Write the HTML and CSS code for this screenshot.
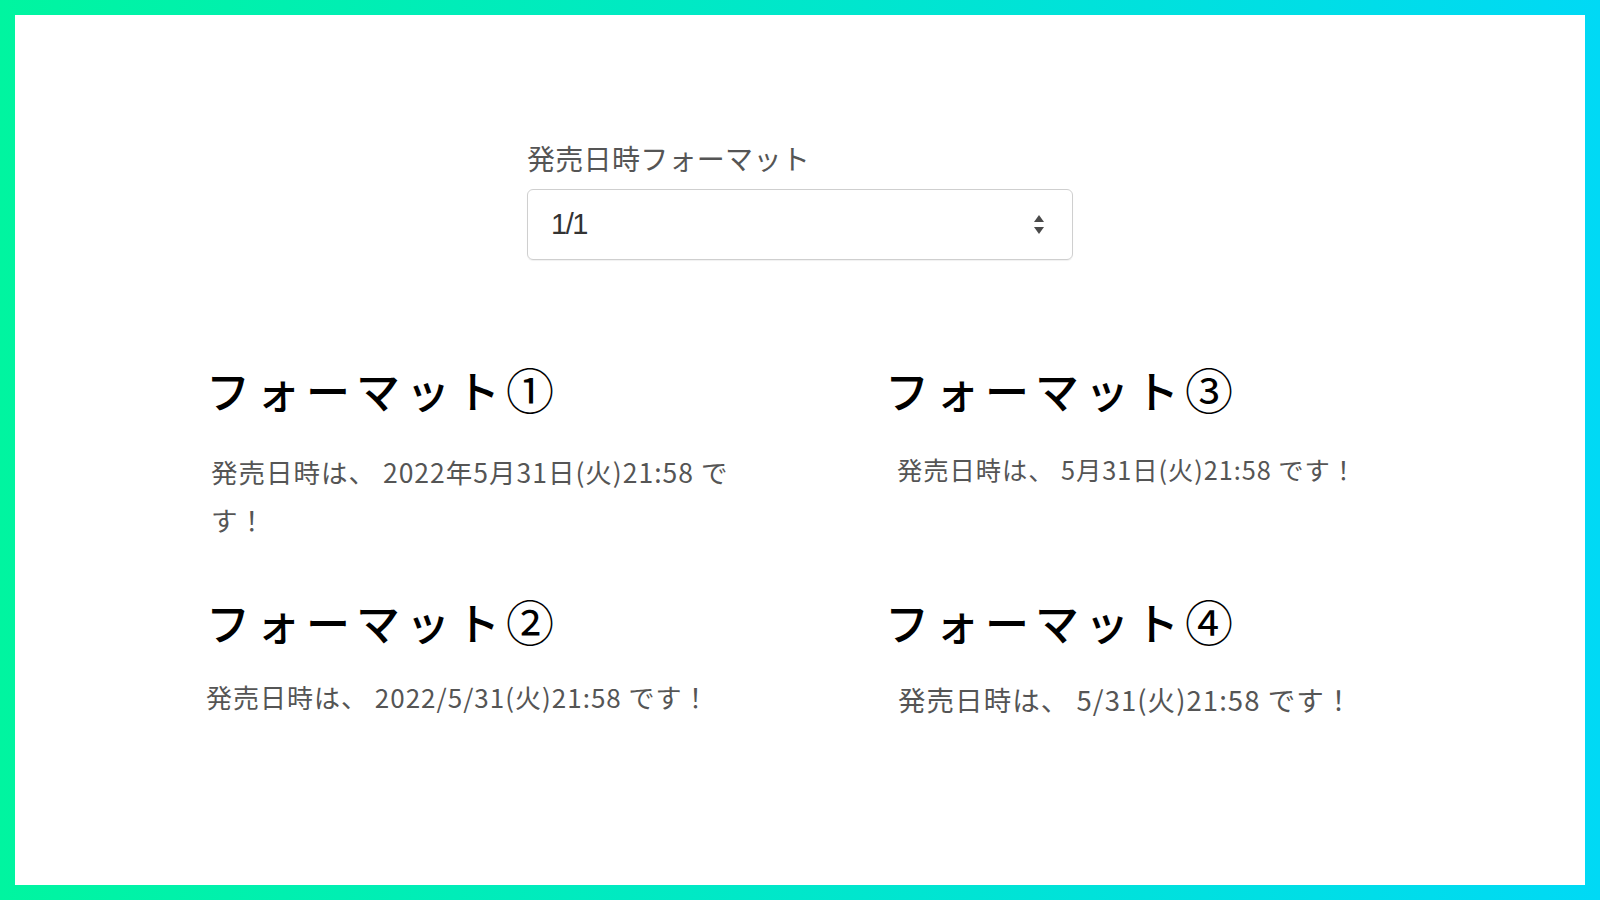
FILE: index.html
```html
<!DOCTYPE html>
<html lang="ja">
<head>
<meta charset="utf-8">
<title>発売日時フォーマット</title>
<link rel="stylesheet" href="styles.css">
</head>
<body>
<div class="frame">
  <main class="sheet">
    <div class="form-group">
      <label class="form-label">発売日時フォーマット</label>
      <div class="select-box">
        <span class="select-value">1/1</span>
        <svg class="select-arrow" width="10" height="19" viewBox="0 0 10 19">
          <path d="M5 0 L10 7 L0 7 Z" fill="#4a4a4a"/>
          <path d="M0 12 L10 12 L5 19 Z" fill="#4a4a4a"/>
        </svg>
      </div>
    </div>
    <section class="formats">
      <div class="format">
        <h2 class="format-title">フォーマット<span class="num">①</span></h2>
        <p class="format-text shift-1">発売日時は、 2022年5月31日(火)21:58 です！</p>
      </div>
      <div class="format">
        <h2 class="format-title">フォーマット<span class="num">②</span></h2>
        <p class="format-text shift-2">発売日時は、 2022/5/31(火)21:58 です！</p>
      </div>
      <div class="format">
        <h2 class="format-title">フォーマット<span class="num">③</span></h2>
        <p class="format-text shift-3">発売日時は、 5月31日(火)21:58 です！</p>
      </div>
      <div class="format">
        <h2 class="format-title">フォーマット<span class="num">④</span></h2>
        <p class="format-text shift-4">発売日時は、 5/31(火)21:58 です！</p>
      </div>
    </section>
  </main>
</div>
</body>
</html>
```
FILE: styles.css
```css
* { box-sizing: border-box; }
html, body { margin: 0; padding: 0; }
body {
  width: 1600px;
  height: 900px;
  overflow: hidden;
  font-family: "Noto Sans CJK JP", "Noto Sans", sans-serif;
}
.frame {
  width: 1600px;
  height: 900px;
  padding: 15px;
  background: linear-gradient(90deg, #00f5a0 0%, #00d9f5 100%);
}
.sheet {
  width: 100%;
  height: 100%;
  background: #ffffff;
  display: flex;
  flex-direction: column;
  padding-top: 123px;
}
.form-group {
  width: 546px;
  margin: 0 auto;
  display: flex;
  flex-direction: column;
}
.form-label {
  font-size: 28px;
  line-height: 40px;
  color: #555555;
  margin-bottom: 11px;
  letter-spacing: 0.3px;
}
.select-box {
  height: 71px;
  border: 1px solid #cfcfcf;
  border-radius: 6px;
  display: flex;
  align-items: center;
  justify-content: space-between;
  padding: 0 28px 0 23px;
  box-shadow: 0 1px 1px rgba(0,0,0,0.06);
}
.select-value {
  font-family: "Liberation Sans", Arial, sans-serif;
  font-size: 29px;
  color: #333333;
  letter-spacing: -1.5px;
}
.select-arrow { display: block; }
.formats {
  margin-top: 100px;
  padding-left: 191px;
  display: grid;
  grid-template-columns: 530px 530px;
  grid-template-rows: auto auto;
  grid-auto-flow: column;
  column-gap: 149px;
  row-gap: 48px;
}
.format-title {
  margin: 0;
  font-size: 44px;
  line-height: 56px;
  font-weight: 500;
  color: #000000;
  letter-spacing: 6px;
}
.num {
  font-size: 48px;
  font-weight: 400;
  letter-spacing: 0;
}
.format-text {
  margin: 30px 0 0;
  font-size: 26.5px;
  line-height: 48px;
  letter-spacing: 1px;
  color: #555555;
}
.shift-1 { padding-left: 5px; margin-top: 30px; }
.shift-2 { padding-left: 0; margin-top: 23px; font-size: 26px; letter-spacing: 1px; }
.shift-3 { padding-left: 12px; margin-top: 27px; font-size: 25.3px; letter-spacing: 0.95px; }
.shift-4 { padding-left: 13px; margin-top: 25px; font-size: 27.5px; letter-spacing: 1.05px; }
```
